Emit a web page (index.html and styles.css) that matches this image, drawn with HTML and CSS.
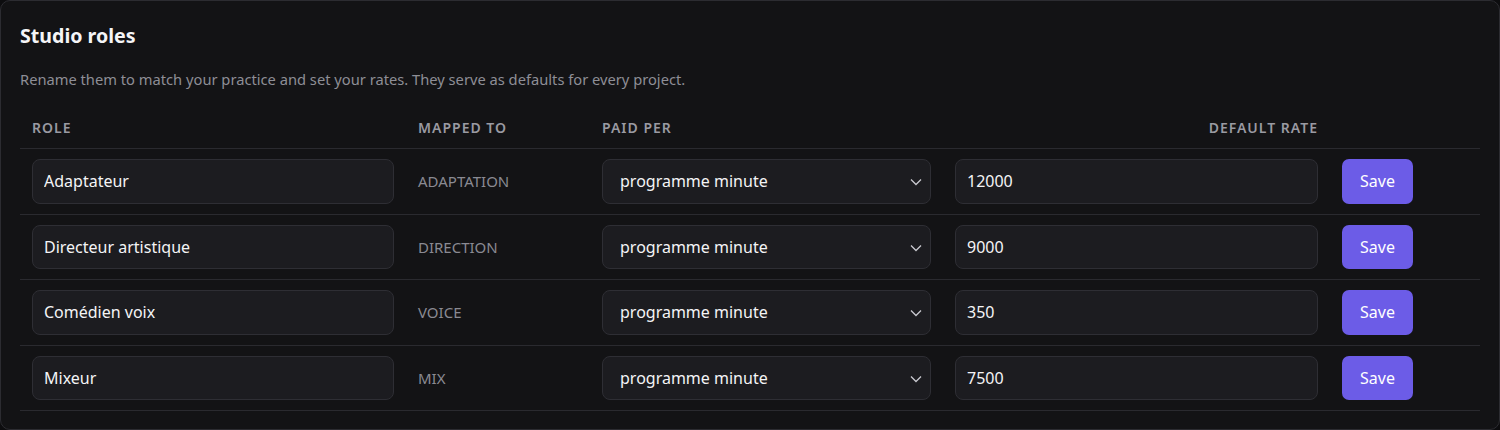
FILE: index.html
```html
<!DOCTYPE html>
<html>
<head lang="en">
    <meta charset="UTF-8">
    <title>Studio roles</title>
    <link rel="stylesheet" href="styles.css">
</head>
<body>
<div class="card">
    <h2 class="card-title">Studio roles</h2>
    <p class="card-desc">Rename them to match your practice and set your rates. They serve as defaults for every project.</p>

    <table class="roles">
        <thead>
        <tr>
            <th class="col-role">Role</th>
            <th class="col-map">Mapped to</th>
            <th class="col-paid">Paid per</th>
            <th class="col-rate">Default rate</th>
            <th class="col-act"></th>
        </tr>
        </thead>
        <tbody>
        <tr>
            <td><input class="field" type="text" value="Adaptateur"></td>
            <td class="mapped">ADAPTATION</td>
            <td>
                <div class="select-wrap">
                    <select class="field select"><option>programme minute</option></select>
                    <svg class="chevron" width="12" height="8" viewBox="0 0 12 8"><path d="M1 1.5l5 5 5-5" fill="none" stroke="#c9c9cf" stroke-width="1.3"/></svg>
                </div>
            </td>
            <td><input class="field" type="text" value="12000"></td>
            <td><button class="save">Save</button></td>
        </tr>
        <tr>
            <td><input class="field" type="text" value="Directeur artistique"></td>
            <td class="mapped">DIRECTION</td>
            <td>
                <div class="select-wrap">
                    <select class="field select"><option>programme minute</option></select>
                    <svg class="chevron" width="12" height="8" viewBox="0 0 12 8"><path d="M1 1.5l5 5 5-5" fill="none" stroke="#c9c9cf" stroke-width="1.3"/></svg>
                </div>
            </td>
            <td><input class="field" type="text" value="9000"></td>
            <td><button class="save">Save</button></td>
        </tr>
        <tr>
            <td><input class="field" type="text" value="Comédien voix"></td>
            <td class="mapped">VOICE</td>
            <td>
                <div class="select-wrap">
                    <select class="field select"><option>programme minute</option></select>
                    <svg class="chevron" width="12" height="8" viewBox="0 0 12 8"><path d="M1 1.5l5 5 5-5" fill="none" stroke="#c9c9cf" stroke-width="1.3"/></svg>
                </div>
            </td>
            <td><input class="field" type="text" value="350"></td>
            <td><button class="save">Save</button></td>
        </tr>
        <tr>
            <td><input class="field" type="text" value="Mixeur"></td>
            <td class="mapped">MIX</td>
            <td>
                <div class="select-wrap">
                    <select class="field select"><option>programme minute</option></select>
                    <svg class="chevron" width="12" height="8" viewBox="0 0 12 8"><path d="M1 1.5l5 5 5-5" fill="none" stroke="#c9c9cf" stroke-width="1.3"/></svg>
                </div>
            </td>
            <td><input class="field" type="text" value="7500"></td>
            <td><button class="save">Save</button></td>
        </tr>
        </tbody>
    </table>
</div>
</body>
</html>
```

FILE: styles.css
```css
* {
    padding: 0;
    margin: 0;
    box-sizing: border-box;
}
body {
    background: #0d0d0f;
    font-family: "Noto Sans", "Open Sans", sans-serif;
    color: #f2f2f5;
}
.card {
    width: 1500px;
    height: 430px;
    background: #131315;
    border: 1px solid #2c2c31;
    border-radius: 10px;
    padding: 19px 19px 19px 19px;
}
.card-title {
    font-size: 19.6px;
    font-weight: 700;
    line-height: 32px;
    color: #f5f5f7;
}
.card-desc {
    margin-top: 16px;
    font-size: 14.7px;
    line-height: 22px;
    color: #8e8e96;
}
.roles {
    margin-top: 18px;
    width: 1460px;
    border-collapse: collapse;
    table-layout: fixed;
}
.roles th {
    text-align: left;
    font-size: 14px;
    font-weight: 600;
    letter-spacing: 1px;
    text-transform: uppercase;
    color: #9a9aa2;
    padding: 10px 12px;
    line-height: 20px;
    border-bottom: 1px solid #2a2a2f;
}
.col-role { width: 386px; }
.col-map { width: 184px; }
.col-paid { width: 353px; }
.col-rate { width: 387px; }
.roles th.col-rate { text-align: right; }
.roles td {
    padding: 10px 12px;
    border-bottom: 1px solid #2a2a2f;
    vertical-align: middle;
}
.mapped {
    font-size: 15px;
    color: #8a8a92;
}
.field {
    width: 100%;
    height: 44.6px;
    background: #1c1c20;
    border: 1px solid #2e2e34;
    border-radius: 8px;
    color: #f4f4f6;
    font-family: "Noto Sans", "Open Sans", sans-serif;
    font-size: 16px;
    padding: 0 11px;
    outline: none;
}
.select-wrap {
    position: relative;
}
.select {
    appearance: none;
    -webkit-appearance: none;
    padding-left: 17px;
}
.chevron {
    position: absolute;
    right: 9px;
    top: 19px;
    pointer-events: none;
}
.save {
    width: 71px;
    height: 44.6px;
    border: none;
    border-radius: 7px;
    background: #6c5ce7;
    color: #ffffff;
    font-family: "Noto Sans", "Open Sans", sans-serif;
    font-size: 16px;
}
```
